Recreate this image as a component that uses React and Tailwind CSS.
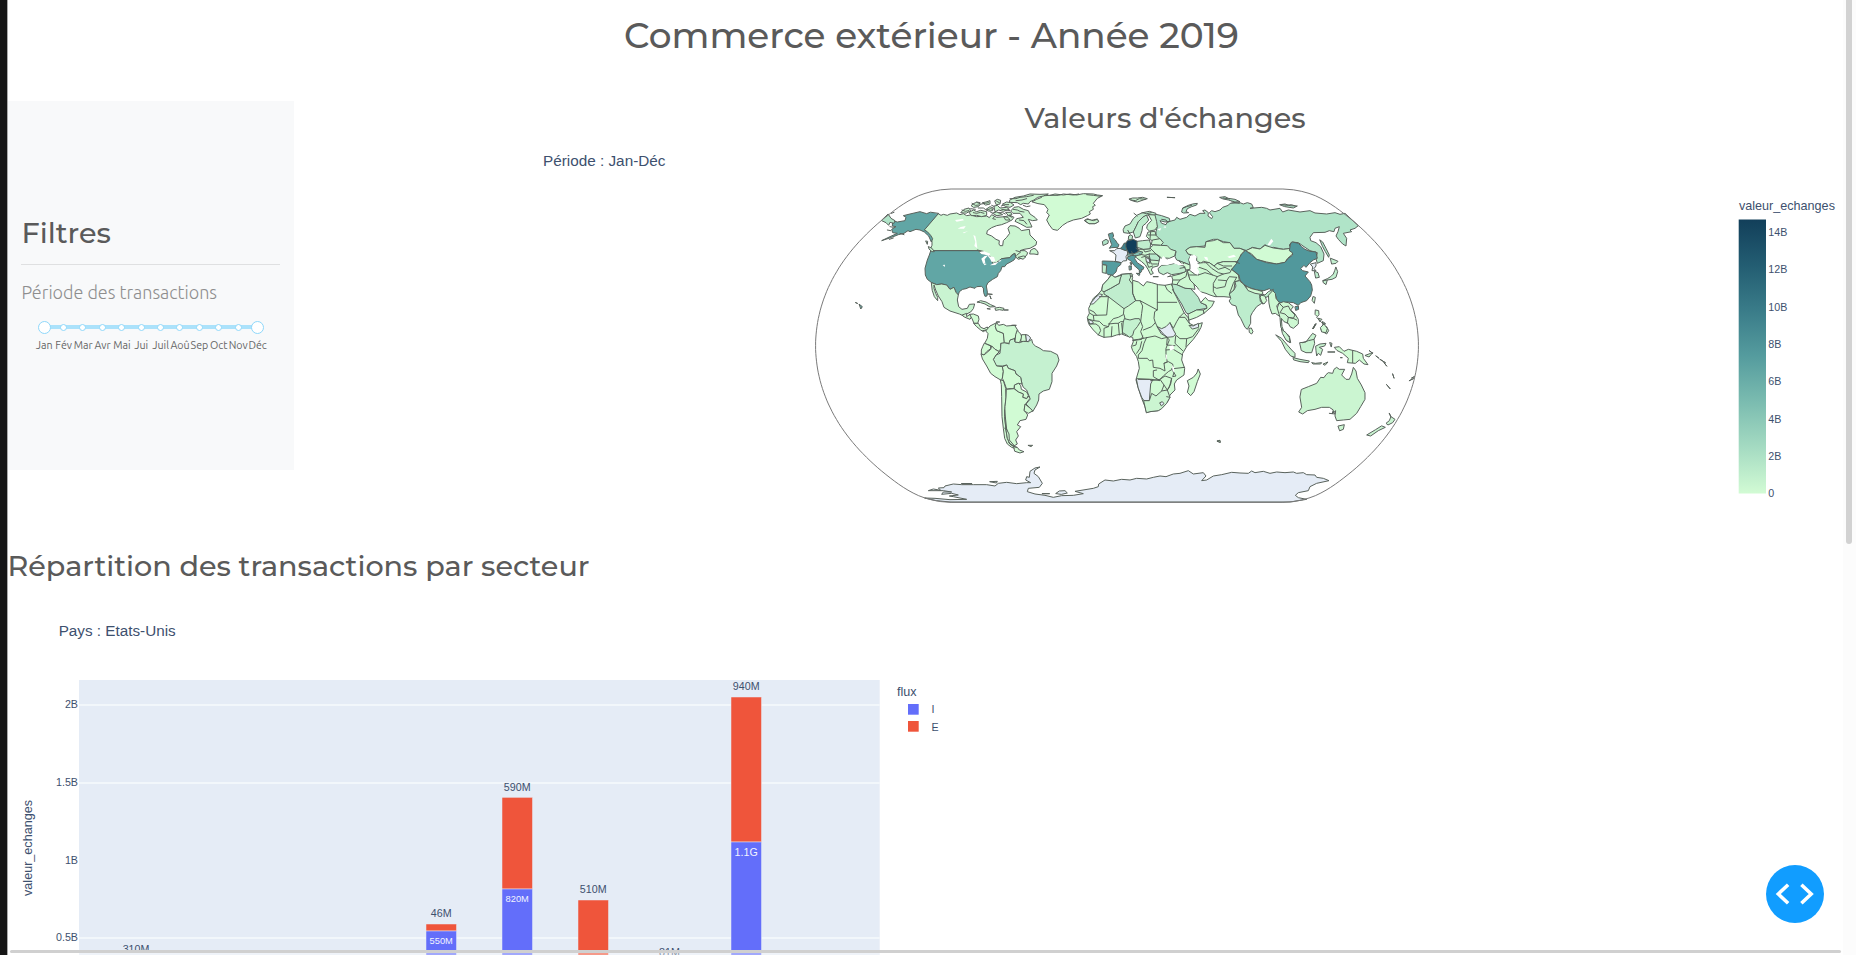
import React from "react";

const NO_DATA = "#e5ecf6";
const L = "#d1fbd4";
const USA = "#61a6a5";
const RUS = "#b0e4c8";

/* Natural Earth projection, used for the globe frame */
const CX = 1117;
const CY = 345.7;
const K = 110.2;
function project(lon, lat) {
  const p = lat * lat;
  const q = p * p;
  return [
    CX + K * lon * (0.8707 - 0.131979 * p + q * (-0.013791 + q * (0.003971 * p - 0.001529 * q))),
    CY - K * lat * (1.007226 + p * (0.015085 + q * (-0.044475 + 0.028874 * p - 0.005916 * q))),
  ];
}
const frame = [];
for (let i = -90; i <= 90; i += 2) frame.push(project(Math.PI, (i * Math.PI) / 180));
for (let i = 90; i >= -90; i -= 2) frame.push(project(-Math.PI, (i * Math.PI) / 180));
const framePoints = frame.map((p) => p.map((v) => v.toFixed(1)).join(",")).join(" ");

/* Every sheet has its own origin; its units are thirds of a pixel */
const sheets = [
  {
    x: 810, y: 180,
    shapes: [
      ["#cbf5d1", "385,101 393,106 400,103 412,106 420,102 440,99 450,104 460,101 470,107 482,105 500,110 530,108 538,113 545,104 560,112 585,110 600,106 612,112 606,120 590,128 575,134 560,137 545,143 532,152 530,162 545,168 558,178 568,182 567,192 570,197 578,197 580,182 590,172 599,160 594,145 600,137 615,138 628,145 634,152 645,150 658,148 660,165 672,177 680,185 678,195 660,205 642,208 630,212 645,212 653,218 650,226 642,232 625,238 618,232 615,220 605,225 600,233 575,236 560,248 545,252 530,245 520,218 505,212 370,212 362,204 366,196 366,185 362,170 350,155 343,150"],
      [USA, "370,212 505,212 512,220 525,222 540,228 545,240 548,250 560,248 575,236 600,233 608,224 614,220 617,232 612,240 600,247 590,252 584,260 576,260 572,272 565,280 562,290 548,298 534,308 529,318 532,336 531,348 525,349 521,338 520,324 514,319 500,320 495,325 480,321 468,326 458,328 448,335 445,345 438,337 432,322 420,328 410,315 395,312 380,314 365,308 352,298 346,285 345,265 352,240 358,225 362,213"],
      [USA, "385,101 343,150 352,155 362,166 368,176 364,186 356,168 343,156 330,150 318,148 300,155 294,152 282,160 265,164 245,172 215,182 240,170 262,160 248,158 245,148 258,140 247,138 248,122 262,126 285,122 288,112 280,107 300,102 330,95 350,101 360,97"],
      [RUS, "235,103 243,115 255,122 252,130 240,127 236,136 228,128 215,122"],
      ["#c9f4d1", "365,308 380,314 395,312 410,315 420,328 432,322 438,337 445,345 442,360 446,380 456,388 472,385 478,373 494,372 490,386 482,396 470,402 465,410 448,402 420,393 402,382 396,365 385,348 377,330 372,315 372,325 377,340 383,352 383,362 373,350 367,332"],
      [L, "457,405 470,400 470,410 480,403 485,410 480,418 465,412"],
      [L, "480,403 490,402 505,408 507,418 503,430 492,430 487,418"],
      [L, "492,430 505,430 512,442 522,446 532,441 536,450 528,450 520,455 512,450 500,440"],
      ["#c9f4d1", "502,366 512,362 528,366 542,374 556,380 540,381 525,372 512,368"],
      [L, "556,384 568,382 582,385 580,391 568,389 558,391"],
      [L, "583,390 594,390"], [L, "532,386 540,387"], [L, "533,342 546,343"], [L, "540,348 543,356"],
      [L, "137,368 142,370"], [USA, "148,373 157,380 153,386"],
      [L, "667,65 680,58 695,52 690,48 720,46 735,42 760,45 780,42 800,45 820,41 850,42 862,45 878,47 862,55 850,70 856,76 848,80 850,88 838,95 841,102 832,107 815,115 790,120 772,127 758,136 748,146 742,151 728,148 718,135 710,120 718,105 710,98 714,88 703,74 685,71"],
      ["#cbf5d1", "824,121 832,116 845,121 862,117 866,125 855,131 838,131 830,127"],
      ["#cbf5d1", "603,92 612,82 626,80 640,88 655,92 660,102 675,112 682,120 668,122 655,118 662,132 666,141 650,142 632,132 615,124 620,116 640,112 630,100 610,100"],
      ["#cbf5d1", "600,60 615,52 640,48 660,42 690,43 715,42 700,48 683,52 672,60 660,65 655,72 640,70 632,74 622,68 600,67"],
      ["#cbf5d1", "478,97 490,90 500,95 512,91 530,95 530,106 515,110 500,106 486,107"],
      ["#cbf5d1", "453,97 462,88 477,84 482,92 470,99"], ["#cbf5d1", "484,76 492,70 500,67 512,72 505,80 492,82"],
      ["#cbf5d1", "518,68 528,66 540,62 540,72 528,75"], ["#cbf5d1", "528,88 540,80 550,84 548,92 536,93"],
      ["#cbf5d1", "555,62 562,58 572,61 570,72 560,74"], ["#cbf5d1", "553,78 562,76 570,84 590,82 598,88 580,94 566,90 556,95"],
      ["#cbf5d1", "578,72 590,66 602,68 612,75 600,82 588,80"], ["#cbf5d1", "548,99 560,96 570,100 578,104 562,107"],
      ["#cbf5d1", "588,97 602,97 606,104 596,106"], ["#cbf5d1", "582,110 594,112 600,120 588,120"],
      ["#cbf5d1", "663,210 672,205 678,208 684,216 684,224 672,222 660,222"],
      ["#cbf5d1", "625,232 640,228 648,230 640,237"],
      ["#cbf5d1", "356,200 366,205 373,215 366,215 358,208"], ["#cbf5d1", "348,183 353,184 352,192"],
    ],
    lines: [
      "618,212 632,216 620,226", "502,210 520,214",
      "486,70 496,76 508,75", "500,66 510,68", "514,72 526,70 536,68", "545,76 552,79", "560,64 568,68", "530,90 542,86 548,88", "540,95 546,99", "505,84 520,84 526,88",
      "574,78 584,74 596,74", "600,56 618,56 630,52 650,50 670,46", "618,62 636,60 650,56", "575,88 590,90 600,92", "610,88 622,90 630,94 642,96", "566,98 578,98 586,102", "598,108 606,112", "640,76 650,80 660,78",
      "456,90 466,94 476,92", "490,98 500,100 512,97 522,100", "628,120 642,122 650,132", "482,86 496,88", "555,108 548,116 556,118",
      "720,46 745,46 760,42 790,45 806,42", "830,44 850,46 872,49",
      "240,140 250,142", "232,150 242,152", "238,178 250,174", "252,97 244,100", "270,160 282,164",
    ],
    white: ["435,120 458,117 462,121 440,125", "443,146 452,141 467,138 462,146", "490,165 496,168 499,182 502,205 493,198 496,186", "458,158 474,153 462,160", "508,216 522,214 541,221 538,229 525,224 514,222", "514,236 524,228 533,227 524,238 526,248 519,250", "533,228 552,231 556,243 545,246 540,236", "540,256 552,249 566,245 556,255", "563,243 575,239 570,245", "398,255 405,254 404,261", "518,248 530,252 524,256"],
  },
  {
    x: 1080, y: 180,
    shapes: [
      [L, "95,285 105,292 125,283 155,280 158,292 156,300 175,306 190,318 200,305 215,308 235,314 255,316 275,312 283,328 277,328 288,348 300,372 312,398 325,414 328,430 340,436 355,432 367,428 363,442 355,457 340,478 320,500 308,520 305,540 314,565 312,585 290,600 283,612 285,630 270,645 265,662 250,680 235,692 210,695 200,698 195,680 185,655 175,625 168,600 172,585 178,565 175,545 170,530 158,512 154,500 160,485 158,472 140,468 125,462 110,465 95,470 72,472 55,465 40,450 28,435 24,425 22,412 28,400 26,385 32,372 40,355 55,342 65,330 68,315 82,300"],
      ["#c0edce", "125,283 150,281 152,292 148,300 157,312 158,340 167,362 145,378 132,386 85,350 72,342 72,335 92,325 118,310 120,298"],
      ["#c9f4d1", "95,285 105,292 125,285 120,298 118,310 92,325 72,335 65,332 68,315 82,300"],
      [NO_DATA, "60,342 68,344 50,362 40,372 30,372 45,354"],
      [NO_DATA, "26,418 38,424 40,430 30,432"],
      ["#c4f1cf", "130,425 133,416 150,420 165,416 178,416 182,424 172,440 162,452 158,466 148,472 140,465 128,458"],
      [NO_DATA, "232,440 245,446 258,440 270,428 278,446 287,462 280,470 262,472 245,462"],
      [NO_DATA, "328,436 340,438 355,430 356,442 338,447"],
      [RUS, "200,100 228,103 245,107 268,115 270,124 255,126 240,122 245,130 258,134 262,126 285,120 290,112 300,118 320,112 330,103 345,108 360,100 375,100 368,92 375,90 385,98 384,108 395,116 398,110 388,98 395,92 405,95 420,90 428,82 445,76 450,70 480,68 490,72 502,68 515,72 520,83 510,85 545,82 560,85 570,90 600,85 608,96 625,90 660,96 690,92 705,99 740,102 765,98 780,103 795,100 835,137 825,145 810,150 815,155 790,160 800,175 798,198 788,192 775,178 768,168 774,155 778,140 765,145 762,155 748,152 735,157 700,158 690,172 692,182 708,188 722,200 732,222 730,242 712,250 708,236 712,218 690,212 672,200 655,188 635,186 628,195 632,205 610,208 580,202 570,204 555,194 540,207 517,202 500,212 480,205 462,205 450,188 430,185 412,178 400,178 378,185 375,198 330,202 318,210 325,222 332,226 326,238 330,255 312,248 290,240 285,230 288,215 265,205 245,195 240,180 228,172 228,155 232,140 222,120"],
      ["#cdf8d2", "318,210 330,202 350,200 375,202 378,185 400,182 412,178 430,188 450,188 462,205 480,205 495,212 482,225 480,235 470,245 450,246 430,245 412,250 402,258 388,248 370,244 362,250 350,242 350,230 335,225 325,222"],
      [L, "497,212 517,203 540,207 555,196 580,204 610,208 632,205 640,220 622,236 615,247 590,252 560,246 530,238 515,222"],
      ["#cdf8d2", "330,272 345,283 355,285 350,265 352,250 370,248 388,248 402,258 412,250 430,245 470,245 470,252 455,268 475,285 478,302 465,305 462,330 448,342 452,352 432,350 405,350 390,345 378,340 360,335 352,322 342,312 330,300 325,285 322,272"],
      ["#cdf8d2", "276,288 300,282 322,272 325,285 330,300 342,312 345,328 332,326 315,325 290,314 276,318 278,300"],
      ["#51989c", "497,212 515,225 530,238 560,248 590,252 615,247 625,235 638,225 637,218 628,212 632,190 638,186 655,190 665,200 675,208 690,214 708,216 712,235 700,240 690,248 678,262 672,256 662,266 668,272 685,276 675,288 690,305 695,315 697,330 692,348 680,362 662,368 655,376 640,368 622,366 608,370 592,364 588,350 578,335 568,326 552,332 530,330 505,322 490,312 480,300 477,285 455,268 470,250 478,234 485,222"],
      ["#51989c", "646,380 655,378 656,388 648,391"],
      ["#bdedcd", "452,354 448,342 462,330 468,318 465,305 478,302 490,312 500,325 520,336 545,342 555,345 565,335 580,328 575,345 558,352 545,370 530,380 517,398 512,408 512,430 502,448 495,442 482,415 475,405 468,378 455,374 448,364"],
      [L, "497,318 515,326 532,330 548,335 548,344 525,340 505,332"],
      [L, "540,345 555,348 560,362 552,372 542,365"],
      ["#cdf8d2", "566,345 578,332 586,340 588,355 598,368 590,378 597,395 600,410 586,400 576,402 570,385 567,370"],
      ["#cdf8d2", "598,370 610,365 625,368 640,380 632,390 645,402 655,418 655,432 640,445 630,440 625,430 612,425 604,415 606,440 612,455 628,468 632,488 620,482 612,462 602,440 600,412 592,385"],
      ["#cdf8d2", "508,445 514,444 519,455 515,462 509,458"], ["#cdf8d2", "700,350 706,352 703,370 697,362"],
      ["#b6e7ca", "276,312 290,314 315,325 332,326 345,340 355,352 362,368 378,375 380,385 350,390 335,398 325,402 318,398 305,372 296,358 282,335"],
      [L, "325,402 350,390 370,390 372,400 350,412 328,420"],
      [L, "378,375 362,368 376,352 385,362 403,364 395,380 372,400 370,390 380,385"],
      ["#c0edce", "235,265 245,256 265,254 285,250 312,258 318,270 315,276 300,280 275,284 262,278 250,284 238,278"],
      [L, "297,242 312,248 330,255 330,268 318,270 312,258"],
      ["#c2efcf", "768,262 773,275 768,292 756,298 742,300 732,306 728,302 742,296 752,290 760,282 764,272"],
      ["#c2efcf", "752,235 765,240 774,244 768,250 756,252"], ["#c2efcf", "730,302 742,300 738,314 730,308"],
      [RUS, "720,180 728,186 738,205 748,225 746,232 736,215 728,200"],
      [NO_DATA, "692,252 708,248 708,258 702,266 708,272 696,272 698,262"],
      ["#bdedcd", "704,274 714,278 718,292 708,294"],
      ["#c0edce", "130,148 135,138 150,132 160,116 172,105 188,98 208,94 228,100 224,106 205,104 188,112 175,125 168,140 160,156 145,160 132,158"],
      ["#bdedcd", "200,106 206,120 198,130 188,138 186,152 180,170 166,174 160,156 168,140 175,125 188,112"],
      ["#c9f4d1", "206,104 225,105 230,125 232,140 225,150 208,153 200,145 202,135 214,122"],
      ["#c9f4d1", "205,156 225,154 228,166 240,178 218,182 208,178 200,170"],
      ["#cdf8d2", "218,180 240,176 250,188 242,196 215,194"],
      ["#cdf8d2", "212,202 220,195 242,196 262,197 272,208 288,213 284,228 268,235 256,234 262,240 250,240 240,230 228,222 212,218"],
      ["#cdf8d2", "165,222 178,208 190,208 212,206 228,222 240,232 236,248 234,258 218,262 214,270 220,280 212,284 204,268 196,255 185,245 170,234"],
      ["#b8e9cb", "208,222 228,222 240,234 236,242 212,240"],
      [NO_DATA, "198,232 208,238 210,250 200,245"],
      ["#5ea3a4", "86,162 98,158 101,168 98,172 106,180 112,190 117,194 114,202 95,203 88,205 95,194 90,180"],
      ["#b0e4c8", "68,184 78,178 85,182 84,190 70,196"],
      [NO_DATA, "90,212 104,212 110,206 122,205 130,209 142,213 143,222 138,230 140,242 130,243 124,248 106,244 108,225 100,218"],
      ["#559da0", "68,243 100,244 123,248 122,254 112,262 108,276 98,285 84,284 78,278 80,256 68,253"],
      ["#c2efcf", "68,254 80,256 78,280 68,278"],
      ["#3f828d", "122,205 128,198 132,190 142,188 142,204 138,212 130,209"],
      ["#123f5a", "138,190 142,182 160,178 172,184 172,202 176,210 168,220 148,222 142,212 138,202"],
      ["#c0edce", "172,184 188,182 208,180 212,192 210,206 190,208 172,202"],
      ["#86c3b5", "143,222 160,222 178,214 188,216 184,224 165,228 155,228 146,230"],
      ["#559da0", "144,230 155,226 168,228 164,236 172,248 192,262 188,270 184,268 184,276 178,280 178,270 162,256 152,242 144,238"],
      ["#559da0", "170,280 180,281 178,286"], ["#559da0", "148,258 154,258 154,269 149,270"], [NO_DATA, "151,248 155,248 154,255"],
      ["#c0edce", "145,178 146,168 152,165 158,168 156,178"],
      [L, "220,290 234,290"], [L, "264,290 272,288"],
      ["#c9f4d1", "148,57 158,54 172,54 188,52 202,56 190,60 172,66 162,64"], [RUS, "262,52 284,53"],
      [RUS, "305,95 308,84 325,76 338,72 352,70 350,75 335,80 322,86 318,95 326,98 312,99"],
      [RUS, "420,52 435,50 445,55 465,58 480,65 465,66 445,60 430,57"], [RUS, "600,74 615,72 630,77 652,78 640,84 615,80"],
      ["#cdf8d2", "707,390 716,392 717,404 712,410 706,404"], ["#cdf8d2", "716,415 726,418 720,424"], ["#cdf8d2", "728,425 736,430 730,436"],
      ["#cdf8d2", "724,448 740,440 746,452 740,462 730,456"], [L, "708,432 700,446"],
      ["#cdf8d2", "144,152 150,162"], ["#cbf5d1", "15,121 24,118 40,122 52,118 56,125 45,131 28,131"],
    ],
    lines: [
      "152,292 158,284", "158,303 158,340 167,362 180,362 232,390 232,314", "232,367 290,367", "180,362 188,378 185,400 182,424 188,440 182,455 190,475 175,478 160,480", "232,390 224,395 222,415 226,428 215,440 190,450",
      "226,428 232,440 250,462 262,472 245,476 225,468 190,475", "85,350 80,405 40,406 30,400", "85,350 58,350", "132,386 130,404 115,412 100,416 90,428 85,440", "132,404 135,416", "40,406 42,422 26,418", "30,432 48,432 58,440 62,452 55,465",
      "42,422 58,424 70,436 85,440 72,445 72,472", "85,432 105,430 115,430 118,465", "96,440 94,470", "115,430 122,425 130,425", "125,430 128,462", "30,390 42,396 50,406",
      "270,428 280,445 290,425 298,412 312,398", "298,412 315,412 328,430", "356,446 338,470 320,476 300,476 287,465", "287,468 285,490 308,512", "320,476 318,500", "262,472 260,495 285,497",
      "255,316 262,330 275,340", "278,300 300,300 318,290 322,272", "300,300 290,314", "325,285 350,285", "358,262 380,270 398,285 412,290 400,310 400,335 410,350", "412,290 430,282 450,278 455,268", "355,285 375,278 398,285",
      "380,250 395,265 415,278 430,282", "402,258 415,268 435,262 450,270", "415,300 440,302 448,290 470,292", "440,302 435,320 410,325 400,320", "470,292 460,310 448,342", "412,250 430,258 455,258",
      "545,342 540,352 548,372", "598,370 610,382 625,378 632,392 645,405 640,415 625,412", "610,382 600,398 615,402 625,412 622,430", "625,412 640,415 650,420",
      "205,165 228,165", "212,155 210,176", "190,208 195,216 212,212", "178,222 195,226 208,222", "185,232 200,228 210,240", "210,240 214,252 232,252", "200,245 206,262 218,258", "212,240 205,230", "168,205 178,212", "160,226 155,215",
      "300,265 315,262", "312,248 306,256", "465,245 478,250",
      "152,60 166,62 178,56 196,58", "245,118 258,120 264,128", "310,84 320,80 335,76", "606,74 620,76 634,74 646,78", "430,54 448,57", "455,66 478,70", "162,100 172,108", "186,98 200,101 214,98",
    ],
    white: ["330,228 343,224 351,230 346,240 352,250 360,258 352,264 358,276 354,284 345,282 340,270 340,258 328,242", "242,240 250,228 258,236 268,242 285,240 300,248 315,256 296,256 280,250 262,255 245,254", "562,195 574,176 580,184 570,196", "372,230 382,232 385,243 376,238", "442,230 462,224 468,230 448,234", "232,148 244,144 240,152", "250,142 256,138 258,144", "355,328 365,338 378,346 374,353 362,345 352,335"],
  },
  {
    x: 960, y: 310,
    shapes: [
      [NO_DATA, "530,206 568,208 578,210 572,222 568,272 552,272 545,262 535,235"],
      ["#cbf5d1", "552,272 568,272 575,250 588,258 605,243 622,240 630,262 620,280 605,296 595,302 570,305 560,308"],
      [NO_DATA, "600,278 607,275 612,281 605,287"],
      [L, "715,178 721,192 712,215 702,245 692,257 682,247 687,228 682,212 700,202 710,190"],
      [L, "772,393 779,391 780,396"],
    ],
    lines: ["518,92 545,88 548,78", "530,95 528,105 518,108", "545,95 540,115 530,130", "560,82 552,100 546,122 535,135 535,145 562,145 568,152 578,150 580,172 600,175 615,183 612,160 622,155 618,140 618,115 628,90 620,80", "535,208 575,208 600,212 580,200 580,182 590,180", "612,160 625,155 638,162 640,176 625,185 610,198 600,208", "572,212 600,208 612,225 605,243", "600,208 615,198 635,205 632,222 622,240 612,225", "640,176 674,172", "640,185 648,198 638,200 642,188 635,176", "635,205 628,232 622,240", "618,120 640,118 668,135", "620,260 630,262"],
    white: ["628,108 640,106 642,118 630,122", "617,132 621,135 620,150 617,145", "636,165 642,172 643,188 638,182"],
  },
  {
    x: 1200, y: 310,
    shapes: [
      ["#cbf5d1", "305,238 325,230 350,220 362,202 372,203 378,194 385,188 398,190 402,178 410,172 418,178 434,178 425,195 438,208 448,208 455,192 460,172 468,183 472,205 484,225 495,248 495,268 482,290 470,310 450,328 430,330 410,332 405,318 407,302 396,312 400,300 388,292 365,292 345,298 322,302 308,312 296,306 305,292 300,262"],
      ["#cbf5d1", "415,348 433,344 430,358 420,362"],
      ["#c9f4d1", "568,310 573,320 585,328 578,338 564,345 558,340 568,332 572,322"], ["#c9f4d1", "546,348 556,352 535,362 512,378 500,375 525,360"],
      [L, "404,112 418,110 426,118 432,124 445,118 470,124 488,132 490,145 504,164 492,162 478,150 466,160 442,158 445,145 428,130 412,122"],
      ["#c9f4d1", "300,98 318,96 330,80 338,70 348,76 342,88 344,100 335,128 318,128 305,122"],
      ["#c9f4d1", "228,75 245,85 262,105 275,120 285,130 285,142 272,138 256,118 245,95"], ["#c9f4d1", "245,58 258,68 268,82 270,98 258,90 248,72"],
      ["#c9f4d1", "280,143 300,148 328,153 325,158 300,155 282,150"], ["#c9f4d1", "348,108 360,102 378,100 374,108 358,112 368,118 362,136 355,130 350,138 348,122"],
      [L, "390,98 396,100 394,110"], [L, "384,126 404,126"], [L, "336,158 346,160 365,158 362,162 340,162"], [L, "370,162 384,156 376,165"], [L, "422,143 426,143"],
      [L, "496,136 512,130 518,128 508,140"], [L, "508,122 518,130"], [L, "528,138 536,144"], [L, "540,148 556,158"], [L, "552,158 560,168"],
      [L, "578,192 582,204"], [L, "560,224 570,236"], [L, "628,212 640,206"], [L, "635,204 643,200"], [L, "338,56 346,42"],
      [L, "362,52 372,42 382,56 378,68 366,66"], [L, "52,393 60,391 61,396"],
    ],
    lines: ["458,122 458,158", "308,98 325,92 342,88", "350,22 365,38 376,42", "388,310 405,312 400,304"],
    white: [],
  },
  {
    x: 810, y: 310,
    shapes: [
      ["#c5f1d0", "572,105 570,130 558,135 550,148 552,158 560,168 578,168 590,165 595,175 615,182 618,192 632,202 636,222 640,232 650,240 657,258 660,268 648,282 662,296 668,305 680,285 686,270 687,252 700,243 718,238 726,215 726,190 740,168 747,150 742,134 722,124 700,122 690,115 676,108 668,100 665,88 655,95 640,94 628,98 615,96 613,85 600,90 592,95 598,102 585,98 575,98"],
      [L, "528,62 540,48 560,38 556,50 560,62 580,70 582,85 583,98 572,100 572,115 568,125 555,118 545,108 530,102 524,100 532,85 534,72"],
      [L, "560,38 566,46 580,43 590,48 614,46 624,62 618,75 615,85 600,90 597,100 583,98 580,70 560,62 556,50"],
      [L, "622,62 632,72 636,82 628,98 615,96 617,75"], [L, "636,74 648,74 650,94 640,94 632,95 634,82"], [NO_DATA, "648,74 655,76 662,84 655,95 650,94"],
      [L, "524,100 542,108 542,116 530,125 522,135 514,132 514,120 518,110"],
      [L, "514,132 522,135 542,118 545,108 555,118 568,125 558,135 550,148 560,168 578,170 580,185 577,205 572,210 555,200 542,190 530,168 518,148"],
      [L, "578,170 590,165 595,175 615,182 618,192 632,202 636,222 625,220 614,225 612,236 595,236 590,238 582,215 577,205 580,185"],
      [L, "614,225 625,220 632,226 634,238 650,246 655,256 650,266 638,262 640,252 625,246 614,236"],
      [L, "572,210 580,212 587,235 588,262 585,290 584,320 588,360 592,385 600,402 615,410 622,418 605,412 592,402 584,385 580,355 576,320 575,260 574,225"],
      [L, "590,238 612,236 625,246 640,252 638,262 650,266 657,258 660,265 646,283 643,300 653,315 648,328 630,332 622,345 632,350 620,365 625,378 617,390 622,402 612,408 600,402 592,385 588,360 584,320 585,290 588,262"],
      [L, "646,283 662,296 668,303 655,310 643,303"], [L, "612,410 622,412 628,420 642,425 630,429 615,424"], [L, "655,406 668,406 664,409"],
      [NO_DATA, "345,564 375,565 420,569 470,568 430,560 418,558 445,555 425,550 395,553 400,546 425,546 400,542 355,542 370,537 392,541 385,534 402,533 405,528 430,522 455,524 490,524 530,524 555,528 565,520 590,517 620,521 650,518 662,518 647,510 650,500 658,502 660,484 675,474 690,471 675,480 672,490 685,500 697,520 688,532 655,535 652,545 675,552 705,556 730,562 755,557 790,556 820,551 795,544 850,535 865,530 866,522 885,510 910,513 935,508 960,510 980,505 1010,507 1030,502 1050,498 1068,500 1090,492 1110,490 1135,482 1150,492 1180,488 1188,498 1175,512 1190,510 1210,498 1235,494 1265,487 1290,489 1315,490 1325,483 1335,488 1360,484 1380,490 1400,486 1425,488 1450,486 1460,490 1480,488 1490,494 1515,495 1520,502 1540,505 1557,512 1520,520 1500,530 1495,542 1465,548 1456,556 1465,563 1490,568 1440,576 420,576 380,572"],
      [NO_DATA, "738,550 748,543 765,542 772,549 755,553"], [NO_DATA, "540,515 562,514 560,518"], [NO_DATA, "455,521 485,521"], [NO_DATA, "697,551 718,551"],
      [L, "560,36 568,36"], [L, "606,46 618,46"],
    ],
    lines: ["584,355 592,360", "518,62 528,60", "584,300 587,330 590,358 597,372 598,390 612,406", "596,398 608,408 620,412"],
    white: [],
  },
];

function WorldMap() {
  return (
    <svg viewBox="300 140 1540 380" className="block h-[380px] w-[1540px]">
      <defs>
        <linearGradient id="scale" x1="0" y1="1" x2="0" y2="0">
          {["#d2fbd4", "#a5dbc2", "#7bbcb0", "#559c9e", "#3a7c89", "#235d72", "#123f5a"].map((c, i) => (
            <stop key={c} offset={i / 6} stopColor={c} />
          ))}
        </linearGradient>
      </defs>
      {sheets.map((s, i) => (
        <g key={i} transform={`translate(${s.x} ${s.y}) scale(0.33333)`} stroke="#58615b" strokeWidth="3" strokeLinejoin="round" strokeLinecap="round">
          {s.shapes.map(([fill, pts], j) => <polygon key={j} fill={fill} points={pts} />)}
          {s.lines.map((pts, j) => <polyline key={j} fill="none" points={pts} />)}
          {s.white.map((pts, j) => <polygon key={j} fill="#fff" stroke="none" points={pts} />)}
        </g>
      ))}
      <polygon points={framePoints} fill="none" stroke="#7a7a7a" strokeWidth="1" />
      <g fontFamily="Liberation Sans, Arial, sans-serif" fill="#3d506e">
        <text x="543" y="166" fontSize="15.3">Période : Jan-Déc</text>
        <text x="1739" y="210" fontSize="12.6">valeur_echanges</text>
        <rect x="1738.7" y="219.5" width="27.3" height="274" fill="url(#scale)" />
        {["14B", "12B", "10B", "8B", "6B", "4B", "2B", "0"].map((t, i) => (
          <text key={t} x="1768.3" y={236 + i * 37.3} fontSize="10.7">{t}</text>
        ))}
      </g>
    </svg>
  );
}

const bars = [
  { x: 426, e: 924, i: 931, top: "46M", inner: "550M", size: 9.3 },
  { x: 502, e: 797.3, i: 889, top: "590M", inner: "820M", size: 9.3 },
  { x: 578, e: 900, i: 951, top: "510M" },
  { x: 731, e: 697, i: 842, top: "940M", inner: "1.1G", size: 10.7 },
];

function SectorChart() {
  return (
    <svg viewBox="8 610 992 345" className="block h-[345px] w-[992px]" fontFamily="Liberation Sans, Arial, sans-serif" fill="#3d506e">
      <text x="58.7" y="635.6" fontSize="15.25">Pays : Etats-Unis</text>
      <rect x="79" y="680" width="800.7" height="275" fill="#e5ecf6" />
      {[705, 783, 938].map((y) => <rect key={y} x="79" y={y - 0.8} width="800.7" height="1.6" fill="#f6f9fc" />)}
      {[["2B", 704.5], ["1.5B", 782.5], ["1B", 860.5], ["0.5B", 937.5]].map(([t, y]) => (
        <text key={t} x="78" y={y + 3.7} fontSize="10.7" textAnchor="end">{t}</text>
      ))}
      <text transform="translate(32 848) rotate(-90)" textAnchor="middle" fontSize="12.6">valeur_echanges</text>
      {bars.map((b) => (
        <g key={b.x} fontSize="10.7" textAnchor="middle">
          <rect x={b.x} y={b.e} width="30.5" height={b.i - b.e} fill="#ef553b" stroke="#e5ecf6" strokeWidth="0.5" />
          <rect x={b.x} y={b.i} width="30.5" height={960 - b.i} fill={b.inner ? "#636efa" : "#ef553b"} stroke="#e5ecf6" strokeWidth="0.5" />
          <text x={b.x + 15.2} y={b.e - 6.8}>{b.top}</text>
          {b.inner && <text x={b.x + 15.2} y={b.i + (b.size > 10 ? 13.5 : 12.6)} fill="#f2f3ff" fontSize={b.size}>{b.inner}</text>}
        </g>
      ))}
      <g fontSize="10.7" textAnchor="middle">
        <text x="136" y="953">310M</text>
        <text x="669.5" y="955.5">81M</text>
      </g>
      <text x="897" y="696.2" fontSize="12.6">flux</text>
      <rect x="908" y="704" width="10.7" height="10.7" fill="#636efa" />
      <rect x="908" y="721" width="10.7" height="10.7" fill="#ef553b" />
      <text x="931.5" y="713.2" fontSize="10.7">I</text>
      <text x="931.5" y="730.5" fontSize="10.7">E</text>
    </svg>
  );
}

const months = ["Jan", "Fév", "Mar", "Avr", "Mai", "Jui", "Juil", "Aoû", "Sep", "Oct", "Nov", "Déc"];

function Filters() {
  return (
    <aside className="mt-[14px] h-[369px] w-[286px] bg-[#f8f9fa] pt-[111px] pl-[13px]">
      <h2 className="h-[42px] pl-[0.6px] font-['Montserrat','Inter',sans-serif] text-[28.65px] leading-[42px] font-medium text-[#5a5a5a]">Filtres</h2>
      <div className="mt-[10px] h-px w-[259px] bg-[#dfe0e1]" />
      <p className="mt-[14px] h-[27px] whitespace-nowrap pl-[0.6px] font-['Ubuntu','Open_Sans',sans-serif] text-[18px] font-light leading-[27px] text-[#8e8e8e]">Période des transactions</p>
      <div className="relative mt-[14px] ml-[23px] h-[14px] w-[213px]">
        <div className="absolute top-[5px] h-1 w-full rounded bg-[#abe2fb]" />
        <div className="absolute -left-[9.7px] flex w-[232.8px] items-center">
          {months.map((m, i) => (
            <div key={m} className="flex h-[14px] flex-1 items-center justify-center">
              <div className={i === 0 || i === 11 ? "h-[13px] w-[13px] shrink-0 rounded-full border border-[#8fd8fa] bg-white" : "h-[7px] w-[7px] rounded-full border border-[#8fd8fa] bg-white"} />
            </div>
          ))}
        </div>
      </div>
      <div className="ml-[13.6px] mt-[2px] flex w-[232.8px]">
        {months.map((m) => (
          <span key={m} className="flex h-[18px] w-[19.4px] shrink-0 justify-center whitespace-nowrap font-['Ubuntu','Open_Sans',sans-serif] text-[10.7px] leading-[18px] text-[#666]">{m}</span>
        ))}
      </div>
    </aside>
  );
}

export default function App() {
  return (
    <div className="relative flex h-[955px] w-[1856px] overflow-hidden bg-white">
      <div className="w-2 shrink-0 border-r border-[#aaa] bg-[#161616]" />
      <main className="flex w-[1835px] shrink-0 flex-col text-[#5a5a5a]">
        <h1 className="h-[87px] pt-[10px] pl-[12px] text-center font-['Montserrat','Inter',sans-serif] text-[35.82px] leading-[50px] font-medium">Commerce extérieur - Année 2019</h1>
        <div className="flex h-[433px]">
          <Filters />
          <section className="flex w-[1540px] flex-col pl-[6px]">
            <h2 className="h-[53px] pt-[11px] pl-[196px] text-center font-['Montserrat','Inter',sans-serif] text-[28.65px] leading-[40px] font-medium">Valeurs d'échanges</h2>
            <WorldMap />
          </section>
        </div>
        <h2 className="-ml-[0.6px] h-[90px] pt-[25.5px] font-['Montserrat','Inter',sans-serif] text-[28.65px] leading-[40px] font-medium">Répartition des transactions par secteur</h2>
        <SectorChart />
      </main>
      <div className="flex flex-1 justify-center bg-[#fcfcfc]">
        <div className="mr-[1px] h-[544px] w-[6px] rounded-b bg-[#d2d2d2]" />
      </div>
      <div className="absolute bottom-0 left-2 h-[5px] w-[1833px] bg-white/40">
        <div className="ml-[2px] h-[3px] rounded bg-[#d0d0d0]" />
      </div>
      <button className="absolute left-[1766px] top-[865px] flex h-[58px] w-[58px] items-center justify-center rounded-full bg-[#119dff]">
        <svg viewBox="0 0 59 59" className="h-[58px] w-[58px]" fill="none" stroke="#fff" strokeWidth="3.6">
          <path d="M22.5 20 L12.5 29.5 L22.5 39" />
          <path d="M36 20 L46 29.5 L36 39" />
        </svg>
      </button>
    </div>
  );
}
